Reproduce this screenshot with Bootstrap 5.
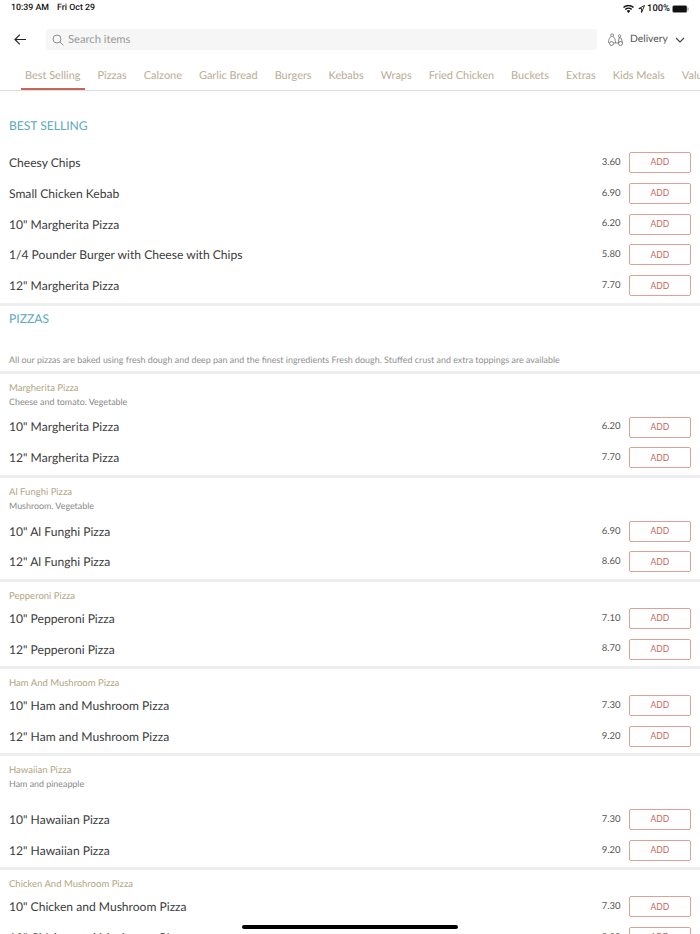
<!DOCTYPE html>
<html lang="en"><head><meta charset="utf-8"><title>Menu</title>
<link href="https://cdn.jsdelivr.net/npm/bootstrap@5.3.0/dist/css/bootstrap.min.css" rel="stylesheet">
<style>
html,body{height:934px;overflow:hidden}
body{font-family:Lato,"Liberation Sans",sans-serif;color:#3f3f3f;background:#fff;position:relative;text-rendering:geometricPrecision}
.sbar{height:16px;padding:1px 11px 0;font:500 8.8px/15px Roboto,"Liberation Sans",sans-serif;color:#111}
.sbar-date{margin-left:8px}
.sbar-pct{margin:0 -2px 0 -2px;font-size:9.4px}
.topbar{height:21px;margin-top:13px;padding:0 10px 0 14px}
.search-box{flex:none;width:551px;height:21px;margin-left:20px;background:#f6f6f6;border-radius:3px;padding-left:6px;color:#9a9a9a;font-size:11.2px}
.search-label{padding-top:1px}
.deliv{flex:none;font-size:10.3px;color:#555;margin-left:11px}
.deliv-label{margin-left:6px;width:37px;padding-top:1px}
.tabs{height:41px;border-bottom:1px solid #ddd;padding:0 0 0 25px;gap:17px;overflow:hidden;white-space:nowrap}
.tabitem{position:relative;font-size:10.95px;line-height:16px;padding-top:18px;color:#b9ad93;flex:none}
.tabitem.on::after{content:"";position:absolute;left:-4px;right:-5px;bottom:0;height:2px;background:#c4675a}
.sect{color:#5aa9c2;font-size:12.1px;padding-left:9px;line-height:16px}
.sect-first{padding-top:27px;height:56px}
.sect-pizza{padding-top:5px;height:46px}
.item-row{height:30.85px;padding:0 9px}
.iname{font-size:12.1px;color:#3c3c3c;padding-top:1px}
.iprice{font-size:9.5px;color:#555;margin-right:8px;padding-top:1px}
.addbtn{width:62.5px;height:21px;border:1.3px solid #dda195;border-radius:2px;color:#c4675a;font-size:8.5px;background:#fff;padding:1px 0 0;line-height:17px}
.sep{height:3px;background:#eeeeee;margin-top:1.800px}
.sep-wide{margin-top:4px}
.grp-head{padding-top:8px}
.gname{font-size:9.5px;color:#b3a582;padding-left:9px;line-height:14px;margin-bottom:-1.400px}
.gdesc{font-size:8.9px;color:#8a8a8a;padding-left:9px;line-height:14px;margin-bottom:3px}
.gdesc-tall{margin-bottom:13px}
.pdesc{font-size:8.93px;color:#8f8f8f;padding:1px 0 0 9px;line-height:14px}
.homebar{position:absolute;left:242px;top:925px;width:216px;height:3.500px;border-radius:2px;background:#000}
</style></head>
<body>
<div class="sbar d-flex justify-content-between align-items-center">
  <div><span>10:39 AM</span><span class="sbar-date">Fri Oct 29</span></div>
  <div class="d-flex align-items-center gap-1">
    <svg width="11" height="8" viewBox="0 0 11 8"><path d="M5.500 8 3.700 5.900a2.600 2.600 0 0 1 3.600 0zM2.800 4.900l-1-1a5.400 5.400 0 0 1 7.400 0l-1 1a4 4 0 0 0-5.400 0zM1 3 0 2a8 8 0 0 1 11 0l-1 1a6.600 6.600 0 0 0-9 0z" fill="#111"/></svg>
    <svg width="7" height="8" viewBox="0 0 7 8"><path d="M6.500.5 .8 3.600h2.800v3.900z" fill="none" stroke="#111" stroke-width=".9"/></svg>
    <span class="sbar-pct">100%</span>
    <svg width="17" height="8" viewBox="0 0 17 8"><rect x=".5" y=".5" width="14.500" height="7" rx="1.600" fill="#111" stroke="#999" stroke-width=".6"/><rect x="15.600" y="2.600" width="1" height="2.800" rx=".5" fill="#999"/></svg>
  </div>
</div>
<div class="topbar d-flex align-items-center">
  <svg width="12" height="11" viewBox="0 0 12 11" fill="none" stroke="#222" stroke-width="1.200"><path d="M12 5.500H1M5.800.7 1 5.500l4.800 4.800"/></svg>
  <div class="search-box d-flex align-items-center gap-1">
    <svg width="12" height="12" viewBox="0 0 12 12" fill="none" stroke="#8f8f8f" stroke-width="1"><circle cx="5" cy="5" r="4"/><path d="m8 8 3.400 3.400"/></svg>
    <span class="search-label">Search items</span>
  </div>
  <div class="deliv d-flex align-items-center">
    <svg width="16" height="13" viewBox="0 0 16 13" fill="none" stroke="#666" stroke-width=".8"><circle cx="3.500" cy="10.500" r="2"/><circle cx="12.500" cy="10.500" r="2"/><path d="M.5 10c0-3.500 1.300-6.500 3.500-6.500S7.500 6 7.500 10H5.500M2.800 3.300V1.800c0-.5.300-.8.800-.8h1c.5 0 .8.300.8.800v1.500M7.500 10h3M10.500 2.500c.3-1 1.800-1 2.100 0s-.5 1.700-1 1.700-1.400-.7-1.100-1.700zM10.500 10l.5-5.500 2 .5 1.700 4.500"/></svg>
    <span class="deliv-label">Delivery</span>
    <svg class="ms-2" width="10" height="6" viewBox="0 0 10 6" fill="none" stroke="#444" stroke-width="1.100"><path d="m1 1 4 4 4-4"/></svg>
  </div>
</div>
<div class="tabs d-flex">
  <span class="tabitem on">Best Selling</span><span class="tabitem">Pizzas</span><span class="tabitem">Calzone</span><span class="tabitem">Garlic Bread</span><span class="tabitem">Burgers</span><span class="tabitem">Kebabs</span><span class="tabitem">Wraps</span><span class="tabitem">Fried Chicken</span><span class="tabitem">Buckets</span><span class="tabitem">Extras</span><span class="tabitem">Kids Meals</span><span class="tabitem">Value Meals</span>
</div>

<div class="sect sect-first">BEST SELLING</div>
<div class="item-row d-flex align-items-center"><span class="iname flex-grow-1">Cheesy Chips</span><span class="iprice">3.60</span><button class="addbtn">ADD</button></div>
<div class="item-row d-flex align-items-center"><span class="iname flex-grow-1">Small Chicken Kebab</span><span class="iprice">6.90</span><button class="addbtn">ADD</button></div>
<div class="item-row d-flex align-items-center"><span class="iname flex-grow-1">10" Margherita Pizza</span><span class="iprice">6.20</span><button class="addbtn">ADD</button></div>
<div class="item-row d-flex align-items-center"><span class="iname flex-grow-1">1/4 Pounder Burger with Cheese with Chips</span><span class="iprice">5.80</span><button class="addbtn">ADD</button></div>
<div class="item-row d-flex align-items-center"><span class="iname flex-grow-1">12" Margherita Pizza</span><span class="iprice">7.70</span><button class="addbtn">ADD</button></div>
<div class="sep"></div>

<div class="sect sect-pizza">PIZZAS</div>
<div class="pdesc">All our pizzas are baked using fresh dough and deep pan and the finest ingredients Fresh dough. Stuffed crust and extra toppings are available</div>
<div class="sep sep-wide"></div>

<div class="grp-head"><div class="gname">Margherita Pizza</div><div class="gdesc">Cheese and tomato. Vegetable</div></div>
<div class="item-row d-flex align-items-center"><span class="iname flex-grow-1">10" Margherita Pizza</span><span class="iprice">6.20</span><button class="addbtn">ADD</button></div>
<div class="item-row d-flex align-items-center"><span class="iname flex-grow-1">12" Margherita Pizza</span><span class="iprice">7.70</span><button class="addbtn">ADD</button></div>
<div class="sep"></div>

<div class="grp-head"><div class="gname">Al Funghi Pizza</div><div class="gdesc">Mushroom. Vegetable</div></div>
<div class="item-row d-flex align-items-center"><span class="iname flex-grow-1">10" Al Funghi Pizza</span><span class="iprice">6.90</span><button class="addbtn">ADD</button></div>
<div class="item-row d-flex align-items-center"><span class="iname flex-grow-1">12" Al Funghi Pizza</span><span class="iprice">8.60</span><button class="addbtn">ADD</button></div>
<div class="sep"></div>

<div class="grp-head"><div class="gname">Pepperoni Pizza</div></div>
<div class="item-row d-flex align-items-center"><span class="iname flex-grow-1">10" Pepperoni Pizza</span><span class="iprice">7.10</span><button class="addbtn">ADD</button></div>
<div class="item-row d-flex align-items-center"><span class="iname flex-grow-1">12" Pepperoni Pizza</span><span class="iprice">8.70</span><button class="addbtn">ADD</button></div>
<div class="sep"></div>

<div class="grp-head"><div class="gname">Ham And Mushroom Pizza</div></div>
<div class="item-row d-flex align-items-center"><span class="iname flex-grow-1">10" Ham and Mushroom Pizza</span><span class="iprice">7.30</span><button class="addbtn">ADD</button></div>
<div class="item-row d-flex align-items-center"><span class="iname flex-grow-1">12" Ham and Mushroom Pizza</span><span class="iprice">9.20</span><button class="addbtn">ADD</button></div>
<div class="sep"></div>

<div class="grp-head"><div class="gname">Hawaiian Pizza</div><div class="gdesc gdesc-tall">Ham and pineapple</div></div>
<div class="item-row d-flex align-items-center"><span class="iname flex-grow-1">10" Hawaiian Pizza</span><span class="iprice">7.30</span><button class="addbtn">ADD</button></div>
<div class="item-row d-flex align-items-center"><span class="iname flex-grow-1">12" Hawaiian Pizza</span><span class="iprice">9.20</span><button class="addbtn">ADD</button></div>
<div class="sep"></div>

<div class="grp-head"><div class="gname">Chicken And Mushroom Pizza</div></div>
<div class="item-row d-flex align-items-center"><span class="iname flex-grow-1">10" Chicken and Mushroom Pizza</span><span class="iprice">7.30</span><button class="addbtn">ADD</button></div>
<div class="item-row d-flex align-items-center"><span class="iname flex-grow-1">12" Chicken and Mushroom Pizza</span><span class="iprice">9.20</span><button class="addbtn">ADD</button></div>
<div class="homebar"></div>
</body></html>
